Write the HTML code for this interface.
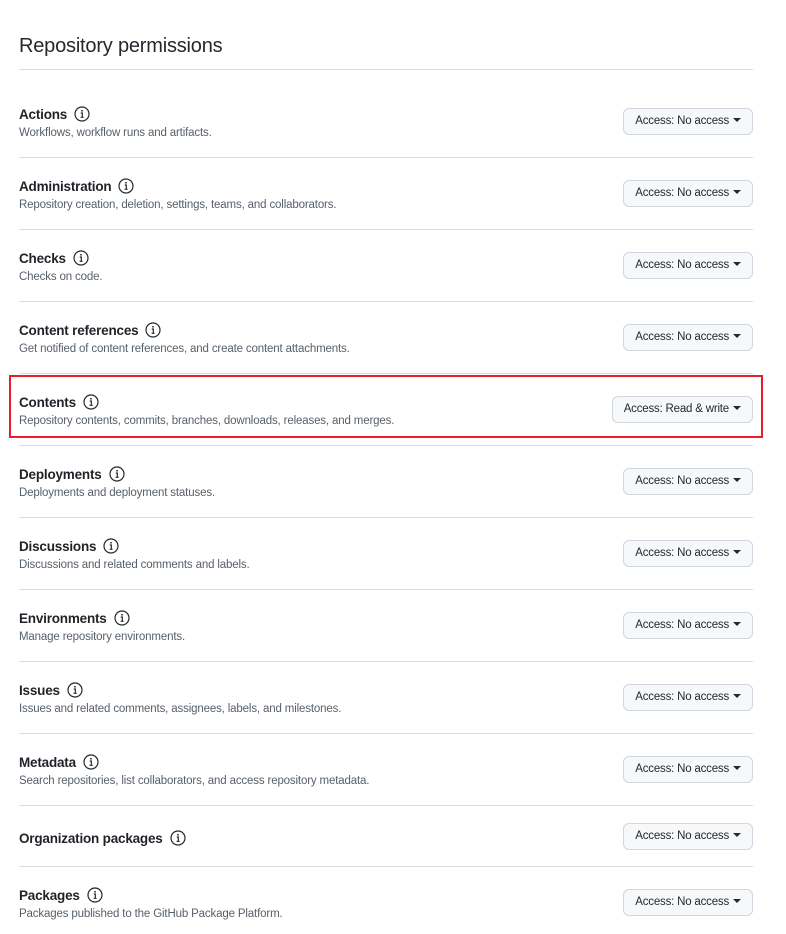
<!DOCTYPE html>
<html><head><style>
body{margin:0;width:786px;height:934px;background:#fff;font-family:"Liberation Sans",sans-serif;color:#24292f;position:relative;overflow:hidden}
.h{position:absolute;left:19px;top:35px;font-size:20px;font-weight:300;color:#24292f;letter-spacing:-0.2px}
.sep{position:absolute;left:19px;width:734px;height:1px;background:#d8dee4}
.t{position:absolute;left:19px;font-size:13.5px;font-weight:600;display:flex;align-items:center;height:18px;color:#1f2328;letter-spacing:-0.2px}
.t svg{margin-left:7px}
.d{position:absolute;left:19px;font-size:11.5px;color:#57606a;height:16px;line-height:16px;letter-spacing:-0.15px}
.b{position:absolute;right:33px;height:25px;border:1px solid #d0d7de;background:#f6f8fa;border-radius:6px;font-size:11.5px;line-height:25px;padding:0 11px;color:#24292f;letter-spacing:-0.2px}
.b i{display:inline-block;width:0;height:0;border-left:4px solid transparent;border-right:4px solid transparent;border-top:4px solid #24292f;margin-left:4px;vertical-align:2px}
.red{position:absolute;left:9px;top:375px;width:750px;height:59px;border:2px solid #e5202a}
</style></head><body>
<div class="h">Repository permissions</div>
<div class="sep" style="top:69px"></div>
<div class="red"></div>
<div id="rows"></div>
<script>
var I='<svg width="16" height="16" viewBox="0 0 16 16"><circle cx="8" cy="8" r="7" fill="none" stroke="#24292f" stroke-width="1.2"/><circle cx="8" cy="4.8" r="0.9" fill="#24292f"/><path d="M6.8 7h1.5v4.2M6.6 11.3h3" fill="none" stroke="#24292f" stroke-width="1.2"/></svg>';
var rows=[["Actions","Workflows, workflow runs and artifacts."],["Administration","Repository creation, deletion, settings, teams, and collaborators."],["Checks","Checks on code."],["Content references","Get notified of content references, and create content attachments."],["Contents","Repository contents, commits, branches, downloads, releases, and merges.","Read &amp; write"],["Deployments","Deployments and deployment statuses."],["Discussions","Discussions and related comments and labels."],["Environments","Manage repository environments."],["Issues","Issues and related comments, assignees, labels, and milestones."],["Metadata","Search repositories, list collaborators, and access repository metadata."]];
var h='';
rows.forEach(function(r,i){var y=85+72*i;
h+='<div class="t" style="top:'+(y+20)+'px">'+r[0]+I+'</div><div class="d" style="top:'+(y+40)+'px">'+r[1]+'</div><div class="b" style="top:'+(y+23)+'px">Access: '+(r[2]||'No access')+'<i></i></div><div class="sep" style="top:'+(y+72)+'px"></div>';});
h+='<div class="t" style="top:829px">Organization packages'+I+'</div><div class="b" style="top:823px">Access: No access<i></i></div><div class="sep" style="top:866px"></div>';
h+='<div class="t" style="top:886px">Packages'+I+'</div><div class="d" style="top:906px">Packages published to the GitHub Package Platform.</div><div class="b" style="top:889px">Access: No access<i></i></div>';
document.getElementById('rows').innerHTML=h;
</script>
</body></html>
